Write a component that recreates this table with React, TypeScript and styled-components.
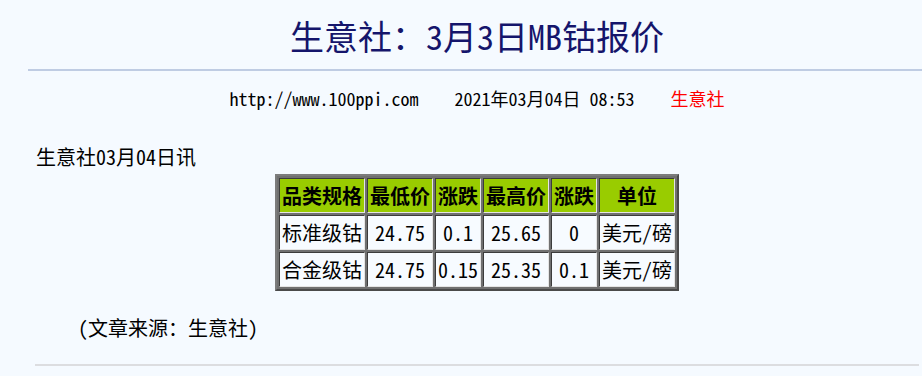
import React from "react";
import styled, { createGlobalStyle } from "styled-components";

const GlobalStyle = createGlobalStyle`
  html, body {
    margin: 0;
    padding: 0;
    background: #f5faff;
    overflow: hidden;
  }
  body {
    font-family: "Noto Sans CJK SC", "Noto Sans", sans-serif;
    font-feature-settings: "hwid" 1;
    color: #000;
  }
`;

const Page = styled.div`
  width: 898px;
  padding-left: 28px;
`;

const Title = styled.h1`
  margin: 0;
  padding-top: 4px;
  height: 65px;
  line-height: 64px;
  font-size: 34px;
  font-weight: 400;
  text-align: center;
  color: #15156b;
`;

const Rule = styled.div<{ $color: string; $inset?: number }>`
  height: 2px;
  background: ${(p) => p.$color};
  margin: 0 ${(p) => p.$inset ?? 0}px;
`;

const Meta = styled.div`
  margin-top: 15px;
  display: flex;
  justify-content: center;
  gap: 36px;
  font-size: 18px;
  line-height: 24px;
`;

const MetaItem = styled.span<{ $red?: boolean }>`
  color: ${(p) => (p.$red ? "#ff0000" : "#000")};
  white-space: pre;
`;

const Content = styled.div`
  padding: 0 8px;
`;

const Para = styled.p<{ $indent?: boolean }>`
  margin: 0;
  font-size: 20px;
  line-height: 24px;
  text-indent: ${(p) => (p.$indent ? "42px" : "0")};
`;

const Dateline = styled(Para)`
  margin-top: 35px;
`;

const Source = styled(Para)`
  margin-top: 25px;
`;

const TableWrap = styled.div`
  display: flex;
  justify-content: center;
  margin-top: 5px;
`;

const Table = styled.table`
  border-collapse: separate;
  border-spacing: 2px;
  background: #707070;
  border: 2px solid;
  border-color: #7c7c7c #4a4a4a #4a4a4a #7c7c7c;
`;

const Cell = styled.td<{ $head?: boolean }>`
  padding: 2px;
  font-size: 20px;
  line-height: 29px;
  text-align: center;
  white-space: nowrap;
  font-weight: ${(p) => (p.$head ? 700 : 400)};
  background: ${(p) => (p.$head ? "#99cc00" : "#f7fbff")};
  border: 1px solid;
  border-color: #3c3c3c #e4e4e4 #e4e4e4 #3c3c3c;
`;

const headers = ["品类规格", "最低价", "涨跌", "最高价", "涨跌", "单位"];
const rows = [
  ["标准级钴", "24.75", "0.1", "25.65", "0", "美元/磅"],
  ["合金级钴", "24.75", "0.15", "25.35", "0.1", "美元/磅"],
];

export default function App() {
  return (
    <>
      <GlobalStyle />
      <Page>
        <Title>生意社：3月3日MB钴报价</Title>
        <Rule $color="#bfcce3" />
        <Meta>
          <MetaItem>http://www.100ppi.com</MetaItem>
          <MetaItem>2021年03月04日 08:53</MetaItem>
          <MetaItem $red>生意社</MetaItem>
        </Meta>
        <Content>
          <Dateline>生意社03月04日讯</Dateline>
          <TableWrap>
            <Table>
              <tbody>
                <tr>
                  {headers.map((h, i) => (
                    <Cell as="th" $head key={i}>
                      {h}
                    </Cell>
                  ))}
                </tr>
                {rows.map((r, ri) => (
                  <tr key={ri}>
                    {r.map((c, ci) => (
                      <Cell key={ci}>{c}</Cell>
                    ))}
                  </tr>
                ))}
              </tbody>
            </Table>
          </TableWrap>
          <Source $indent>(文章来源：生意社)</Source>
          <Rule $color="#dcdde0" $inset={-1} style={{ marginTop: 24 }} />
        </Content>
      </Page>
    </>
  );
}
